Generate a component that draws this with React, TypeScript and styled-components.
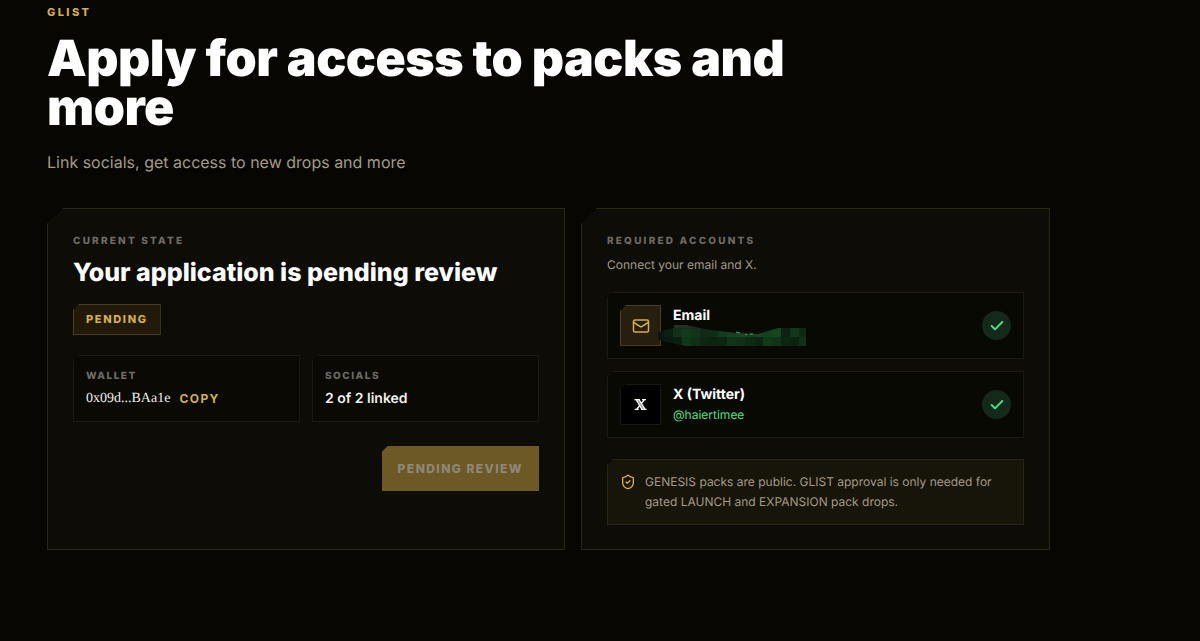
import React from "react";
import styled, { createGlobalStyle, css } from "styled-components";
import { Check, Mail, ShieldCheck } from "lucide-react";

const GlobalStyle = createGlobalStyle`
  *, *::before, *::after { box-sizing: border-box; }
  body {
    margin: 0;
    min-height: 100vh;
    background: #070602;
    color: #fff;
    font-family: Inter, "Liberation Sans", sans-serif;
    text-rendering: geometricPrecision;
  }
  h1, h2, p, dl, dt, dd, ul { margin: 0; padding: 0; }
`;

const notch = (size: number) => css`
  clip-path: polygon(${size}px 0, 100% 0, 100% 100%, 0 100%, 0 ${size}px);
`;

const Page = styled.main`
  padding: 4px 150px 90px 47px;
`;

const Header = styled.header`
  max-width: 800px;
`;

const Eyebrow = styled.p`
  color: #d4af4a;
  font-size: 11px;
  font-weight: 800;
  line-height: 16px;
  letter-spacing: 0.22em;
`;

const Title = styled.h1`
  margin-top: 15px;
  font-size: 50px;
  font-weight: 900;
  line-height: 49px;
  letter-spacing: -0.01em;
`;

const Lead = styled.p`
  margin-top: 17px;
  color: #a39a88;
  font-size: 16px;
  line-height: 24px;
`;

const Columns = styled.div`
  display: grid;
  grid-template-columns: minmax(0, 518fr) minmax(0, 469fr);
  gap: 16px;
  margin-top: 34px;
`;

const Card = styled.section`
  display: flex;
  flex-direction: column;
  padding: 24px 25px;
  border: 1px solid #2c2712;
  background: #0d0c06;
  ${notch(16)}
`;

const Label = styled.p`
  color: #6e6b65;
  font-size: 10px;
  font-weight: 800;
  line-height: 16px;
  letter-spacing: 0.22em;
`;

const CardTitle = styled.h2`
  margin-top: 9px;
  font-size: 25px;
  font-weight: 800;
  line-height: 30px;
`;

const Badge = styled.span`
  align-self: flex-start;
  margin-top: 16px;
  padding: 0 12px;
  border: 1px solid #4b3d18;
  background: #211a0b;
  color: #d4af4a;
  font-size: 11px;
  font-weight: 800;
  line-height: 29px;
  letter-spacing: 0.15em;
  ${notch(6)}
`;

const Stats = styled.dl`
  display: grid;
  grid-template-columns: 1fr 1fr;
  gap: 12px;
  margin-top: 20px;
`;

const Stat = styled.div`
  padding: 12px;
  border: 1px solid #1c1a10;
  background: #0a0904;
  ${notch(6)}
`;

const StatLabel = styled.dt`
  color: #6e6b65;
  font-size: 10px;
  font-weight: 800;
  line-height: 16px;
  letter-spacing: 0.15em;
`;

const StatValue = styled.dd`
  display: flex;
  align-items: center;
  gap: 9px;
  margin-top: 5px;
  color: #f1efe9;
  font-size: 14px;
  font-weight: 600;
  line-height: 20px;
`;

const Address = styled.span`
  font-family: "Liberation Serif", serif;
  font-size: 14px;
  font-weight: 400;
`;

const CopyButton = styled.button`
  padding: 0;
  border: 0;
  background: none;
  color: #d4af4a;
  font: 700 12px/20px Inter, sans-serif;
  letter-spacing: 0.12em;
  cursor: pointer;
`;

const SubmitButton = styled.button`
  align-self: flex-end;
  height: 45px;
  margin-top: 24px;
  padding: 0 16px;
  border: 0;
  background: #6d5926;
  color: #8e8878;
  font: 800 12px/20px Inter, sans-serif;
  letter-spacing: 0.12em;
  ${notch(6)}
`;

const CardText = styled.p`
  margin-top: 6px;
  color: #a39a88;
  font-size: 12px;
  line-height: 20px;
`;

const Accounts = styled.ul`
  display: grid;
  gap: 12px;
  margin-top: 17px;
  list-style: none;
`;

const Account = styled.li`
  display: flex;
  align-items: center;
  gap: 12px;
  min-height: 67px;
  padding: 12px;
  border: 1px solid #1c1a10;
  background: #090904;
  ${notch(6)}
`;

const AccountIcon = styled.span<{ $dark?: boolean }>`
  display: grid;
  place-items: center;
  flex: none;
  width: 41px;
  height: 41px;
  border: 1px solid ${(p) => (p.$dark ? "#191710" : "#4b3d18")};
  background: ${(p) => (p.$dark ? "#000" : "#261e0e")};
  color: ${(p) => (p.$dark ? "#fff" : "#d4af4a")};
  ${notch(6)}
`;

const AccountInfo = styled.div`
  flex: 1;
  min-width: 0;
`;

const AccountName = styled.p`
  font-size: 14px;
  font-weight: 700;
  line-height: 20px;
`;

const AccountHandle = styled.p`
  position: relative;
  height: 20px;
  color: #4ade80;
  font-size: 12px;
  line-height: 20px;
`;

const Mosaic = styled.svg`
  position: absolute;
  top: -3px;
  left: -15px;
`;

const Done = styled.span`
  display: grid;
  place-items: center;
  flex: none;
  width: 29px;
  height: 29px;
  border-radius: 50%;
  background: #14291a;
  color: #4ade80;
`;

const Note = styled.aside`
  display: flex;
  gap: 9px;
  margin-top: 21px;
  padding: 12px;
  border: 1px solid #2a2612;
  background: #17140a;
  color: #a39a88;
  font-size: 12px;
  line-height: 20px;
  ${notch(6)}

  svg {
    flex: none;
    margin-top: 2px;
    color: #d4af4a;
  }
`;

const topRow = ["#0b2011", "#113219", "#143a1d", "#12341a", "#0f2a16", "#0f2c17", "#123a1d", "#14421f", "#154823", "#15401f", "#154522", "#134020", "#15471f", "#0b2412", "#12361b", "#0d2a15"];
const bottomRow = ["#0a1a0e", "#0b2011", "#10371a", "#0f3018", "#0c2613", "#0b2311", "#0c2613", "#11341a", "#103019", "#0d2c15", "#0c2412", "#113a1b", "#10331a", "#0c2612", "#0c2211", "#103018"];

function HiddenAddress() {
  return (
    <Mosaic width="150" height="30" viewBox="0 0 150 30" role="img" aria-label="Hidden address">
      <defs>
        <clipPath id="brush">
          <path d="M0 9 L15 5 L45 6 L78 10 L100 11 L120 5 H148 V23 H28 L0 17 Z" />
        </clipPath>
      </defs>
      <path d="M16 2 H28 L46 6 H16 Z" fill="#2b2b28" />
      <g clipPath="url(#brush)">
        <rect width="150" height="30" fill="#0b180d" />
        {topRow.map((fill, i) => (
          <rect key={i} x={6 + i * 9} y={4} width={9} height={10} fill={fill} />
        ))}
        {bottomRow.map((fill, i) => (
          <rect key={i} x={6 + i * 9} y={14} width={9} height={9} fill={fill} />
        ))}
      </g>
      <path d="M78 9 l4 1 M87 11 l2 1 M92 11 l3 0" stroke="#3fae68" fill="none" />
    </Mosaic>
  );
}

function XLogo() {
  return (
    <svg width="13" height="13" viewBox="0 0 14 14" fill="none" stroke="currentColor" role="img" aria-label="X">
      <path d="M0.5 1.7 H6.2 M8.5 1.7 H13 M0.8 12.3 H5 M7.8 12.3 H13.5" strokeWidth="1.5" />
      <path d="M2.2 1.5 L8.8 12.5 M5.2 1.5 L12 12.5" strokeWidth="1.5" />
      <path d="M3.7 1.5 L10.4 12.5" strokeWidth="0.8" />
      <path d="M11.3 1.5 L7.8 6 M6.4 7.8 L2.7 12.5" strokeWidth="1.5" />
    </svg>
  );
}

export default function App() {
  return (
    <>
      <GlobalStyle />
      <Page>
        <Header>
          <Eyebrow>GLIST</Eyebrow>
          <Title>Apply for access to packs and more</Title>
          <Lead>Link socials, get access to new drops and more</Lead>
        </Header>
        <Columns>
          <Card>
            <Label>CURRENT STATE</Label>
            <CardTitle>Your application is pending review</CardTitle>
            <Badge>PENDING</Badge>
            <Stats>
              <Stat>
                <StatLabel>WALLET</StatLabel>
                <StatValue>
                  <Address>0x09d...BAa1e</Address>
                  <CopyButton type="button">COPY</CopyButton>
                </StatValue>
              </Stat>
              <Stat>
                <StatLabel>SOCIALS</StatLabel>
                <StatValue>2 of 2 linked</StatValue>
              </Stat>
            </Stats>
            <SubmitButton type="button" disabled>PENDING REVIEW</SubmitButton>
          </Card>
          <Card>
            <Label>REQUIRED ACCOUNTS</Label>
            <CardText>Connect your email and X.</CardText>
            <Accounts>
              <Account>
                <AccountIcon><Mail size={18} strokeWidth={2} /></AccountIcon>
                <AccountInfo>
                  <AccountName>Email</AccountName>
                  <AccountHandle><HiddenAddress /></AccountHandle>
                </AccountInfo>
                <Done><Check size={16} strokeWidth={3} /></Done>
              </Account>
              <Account>
                <AccountIcon $dark><XLogo /></AccountIcon>
                <AccountInfo>
                  <AccountName>X (Twitter)</AccountName>
                  <AccountHandle>@haiertimee</AccountHandle>
                </AccountInfo>
                <Done><Check size={16} strokeWidth={3} /></Done>
              </Account>
            </Accounts>
            <Note>
              <ShieldCheck size={16} strokeWidth={2} />
              <p>GENESIS packs are public. GLIST approval is only needed for gated LAUNCH and EXPANSION pack drops.</p>
            </Note>
          </Card>
        </Columns>
      </Page>
    </>
  );
}
